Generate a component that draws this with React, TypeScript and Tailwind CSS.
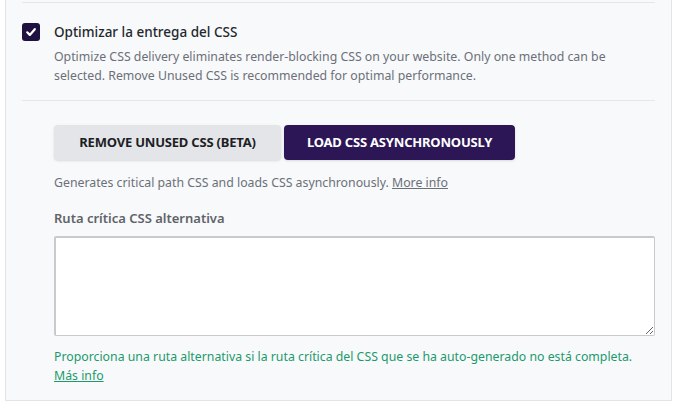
import React from "react";

const font = { fontFamily: '"Noto Sans", "Open Sans", sans-serif' };

const App = () => {
  return (
    <div className="w-[679px] h-[406px] bg-white overflow-hidden" style={font}>
      <div className="ml-[5px] w-[667px] h-[401px] bg-[#f8f9fb] border-x border-b border-[#e2e4e7] px-[16px]">
        <div className="pt-[2px]">
          <div className="h-px bg-[#e4e6ea]" />
        </div>

        {/* main option */}
        <div className="flex pt-[20px] pb-[15px]">
          <div className="w-[18px] h-[18px] rounded-[3px] bg-[#1f1240] flex items-center justify-center shrink-0">
            <svg width="12" height="12" viewBox="0 0 12 12" fill="none">
              <path
                d="M2.2 6.3 L4.8 8.9 L9.8 3.2"
                stroke="white"
                strokeWidth="2.2"
                strokeLinecap="round"
                strokeLinejoin="round"
              />
            </svg>
          </div>
          <div className="pl-[14px]">
            <p className="text-[13.5px] leading-[18px] font-medium text-[#23282d]">
              Optimizar la entrega del CSS
            </p>
            <p className="mt-[6px] text-[12.3px] leading-[19px] text-[#6b7078] w-[570px]">
              Optimize CSS delivery eliminates render-blocking CSS on your website. Only one method can be
              selected. Remove Unused CSS is recommended for optimal performance.
            </p>
          </div>
        </div>

        <div className="h-px bg-[#e4e6ea]" />

        {/* sub options */}
        <div className="pl-[32px] pt-[24px]">
          <div className="flex gap-[3px]">
            <button className="w-[227px] h-[35px] rounded-[4px] bg-[#e4e5e9] shadow-sm text-[13px] font-bold text-[#1d1f24] uppercase tracking-[-0.2px]">
              Remove Unused CSS (Beta)
            </button>
            <button className="w-[231px] h-[35px] rounded-[4px] bg-[#2d1656] shadow-sm text-[13px] font-bold text-white uppercase tracking-[-0.2px]">
              Load CSS Asynchronously
            </button>
          </div>

          <p className="mt-[14px] text-[12.3px] leading-[18px] text-[#6b7078]">
            Generates critical path CSS and loads CSS asynchronously.{" "}
            <a href="#" className="underline">More info</a>
          </p>

          <p className="mt-[17px] text-[13px] leading-[18px] font-semibold text-[#5f6368]">
            Ruta crítica CSS alternativa
          </p>

          <textarea className="mt-[9px] block w-[601px] h-[100px] bg-white border border-[#c8cacf] border-t-2 border-l-2 rounded-[2px] resize-y outline-none" />

          <p className="mt-[11px] text-[12.3px] leading-[19px] text-[#1c9a6c]">
            Proporciona una ruta alternativa si la ruta crítica del CSS que se ha auto-generado no está completa.
            <br />
            <a href="#" className="underline">Más info</a>
          </p>
        </div>
      </div>
    </div>
  );
};

export default App;
